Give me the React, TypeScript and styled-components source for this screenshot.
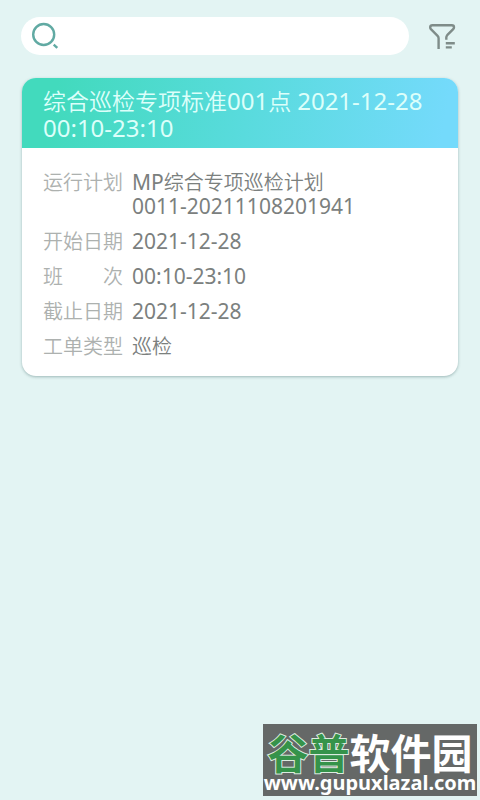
import React from "react";
import styled, { createGlobalStyle } from "styled-components";

const GlobalStyle = createGlobalStyle`
  *, *::before, *::after { box-sizing: border-box; }
  body {
    margin: 0;
    background: #e3f4f3;
    font-family: "Noto Sans", "Noto Sans CJK SC", sans-serif;
  }
`;

const Page = styled.div`
  position: relative;
  min-height: 100vh;
  display: flex;
  flex-direction: column;
`;

const Toolbar = styled.header`
  display: flex;
  align-items: center;
  gap: 20px;
  padding: 17px 24px 0 21px;
`;

const SearchBox = styled.label`
  flex: 1;
  min-width: 0;
  height: 38px;
  display: flex;
  align-items: center;
  gap: 8px;
  padding: 0 16px 0 10px;
  border-radius: 19px;
  background: #fff;
`;

const SearchInput = styled.input`
  flex: 1;
  min-width: 0;
  border: 0;
  outline: 0;
  background: transparent;
  color: #7f8583;
  font: inherit;
  font-size: 20px;
`;

const FilterButton = styled.button`
  display: flex;
  padding: 0;
  border: 0;
  background: transparent;
  cursor: pointer;
`;

const List = styled.main`
  padding: 23px 22px;
`;

const Card = styled.article`
  overflow: hidden;
  border-radius: 14px;
  background: #fff;
  box-shadow: 0 1px 3px rgba(70, 110, 110, 0.45);
`;

const CardTitle = styled.h2`
  margin: 0;
  padding: 10px 21px 6px;
  background: linear-gradient(100deg, #42dabd 8%, #58dbdc 50%, #74dafb 96%);
  color: #dcfffa;
  font-size: 23px;
  font-weight: 350;
  line-height: 27px;
`;

const Fields = styled.dl`
  display: flex;
  flex-direction: column;
  gap: 11px;
  margin: 0;
  padding: 23px 21px 17px;
`;

const Field = styled.div`
  display: flex;
  gap: 9px;
  font-size: 20px;
  line-height: 24px;
`;

const Label = styled.dt`
  flex: none;
  width: 80px;
  display: flex;
  justify-content: space-between;
  color: #adb1af;
  font-weight: 350;
`;

const Value = styled.dd`
  margin: 0;
  color: #7b807e;
  font-weight: 350;
`;

const Digits = styled.span<{ $large?: boolean }>`
  font-size: ${(p) => (p.$large ? 24 : 21)}px;
  font-weight: 400;
  line-height: 1;
`;

const Watermark = styled.aside`
  position: absolute;
  right: 3px;
  bottom: 4px;
  width: 214px;
  height: 72px;
  display: flex;
  flex-direction: column;
  align-items: center;
  padding-top: 7px;
  background: #656867;
  color: #fff;
  white-space: nowrap;
`;

const Brand = styled.div`
  font-family: "Noto Sans CJK SC", sans-serif;
  font-size: 41px;
  font-weight: 700;
  line-height: 40px;
`;

const BrandAccent = styled.span`
  color: #35934a;
  -webkit-text-stroke: 2px #dcece0;
  paint-order: stroke fill;
`;

const SiteLink = styled.a`
  color: inherit;
  font-size: 20px;
  font-weight: 700;
  line-height: 24px;
  text-decoration: none;
`;

const SearchIcon = () => (
  <svg width="28" height="28" viewBox="0 0 28 28" fill="none" stroke="#61aaa3" strokeWidth="2.4" aria-hidden="true">
    <circle cx="12.7" cy="12.5" r="10.5" />
    <path d="M22.7 22.6l3.6 3.3" />
  </svg>
);

const FilterIcon = () => (
  <svg width="27" height="28" viewBox="0 0 27 28" fill="none" stroke="#7f8c89" strokeWidth="2.4" strokeLinejoin="round" aria-hidden="true">
    <path d="M9.6 27V16.2Q9.6 14.8 8.6 13.8L1.9 7.1Q1.2 6.3 1.2 5.2Q1.2 3.2 3.4 3.2H22.8Q25 3.2 25 5.2Q25 6.3 24.2 7.1L18.2 13.2Q17.3 14.2 17.3 15.5V17.8" />
    <path d="M16.8 21.2H25.8M16.8 25.4H22.8" />
  </svg>
);

export default function App() {
  return (
    <>
      <GlobalStyle />
      <Page>
        <Toolbar>
          <SearchBox>
            <SearchIcon />
            <SearchInput type="text" aria-label="搜索" />
          </SearchBox>
          <FilterButton type="button" aria-label="筛选">
            <FilterIcon />
          </FilterButton>
        </Toolbar>
        <List>
          <Card>
            <CardTitle>
              综合巡检专项标准<Digits $large>001</Digits>点{" "}
              <Digits $large>2021-12-28 00:10-23:10</Digits>
            </CardTitle>
            <Fields>
              <Field>
                <Label>运行计划</Label>
                <Value>
                  <Digits>MP</Digits>综合专项巡检计划
                  <br />
                  <Digits>0011-20211108201941</Digits>
                </Value>
              </Field>
              <Field>
                <Label>开始日期</Label>
                <Value><Digits>2021-12-28</Digits></Value>
              </Field>
              <Field>
                <Label><span>班</span><span>次</span></Label>
                <Value><Digits>00:10-23:10</Digits></Value>
              </Field>
              <Field>
                <Label>截止日期</Label>
                <Value><Digits>2021-12-28</Digits></Value>
              </Field>
              <Field>
                <Label>工单类型</Label>
                <Value>巡检</Value>
              </Field>
            </Fields>
          </Card>
        </List>
        <Watermark>
          <Brand><BrandAccent>谷普</BrandAccent>软件园</Brand>
          <SiteLink href="http://www.gupuxlazal.com">www.gupuxlazal.com</SiteLink>
        </Watermark>
      </Page>
    </>
  );
}
